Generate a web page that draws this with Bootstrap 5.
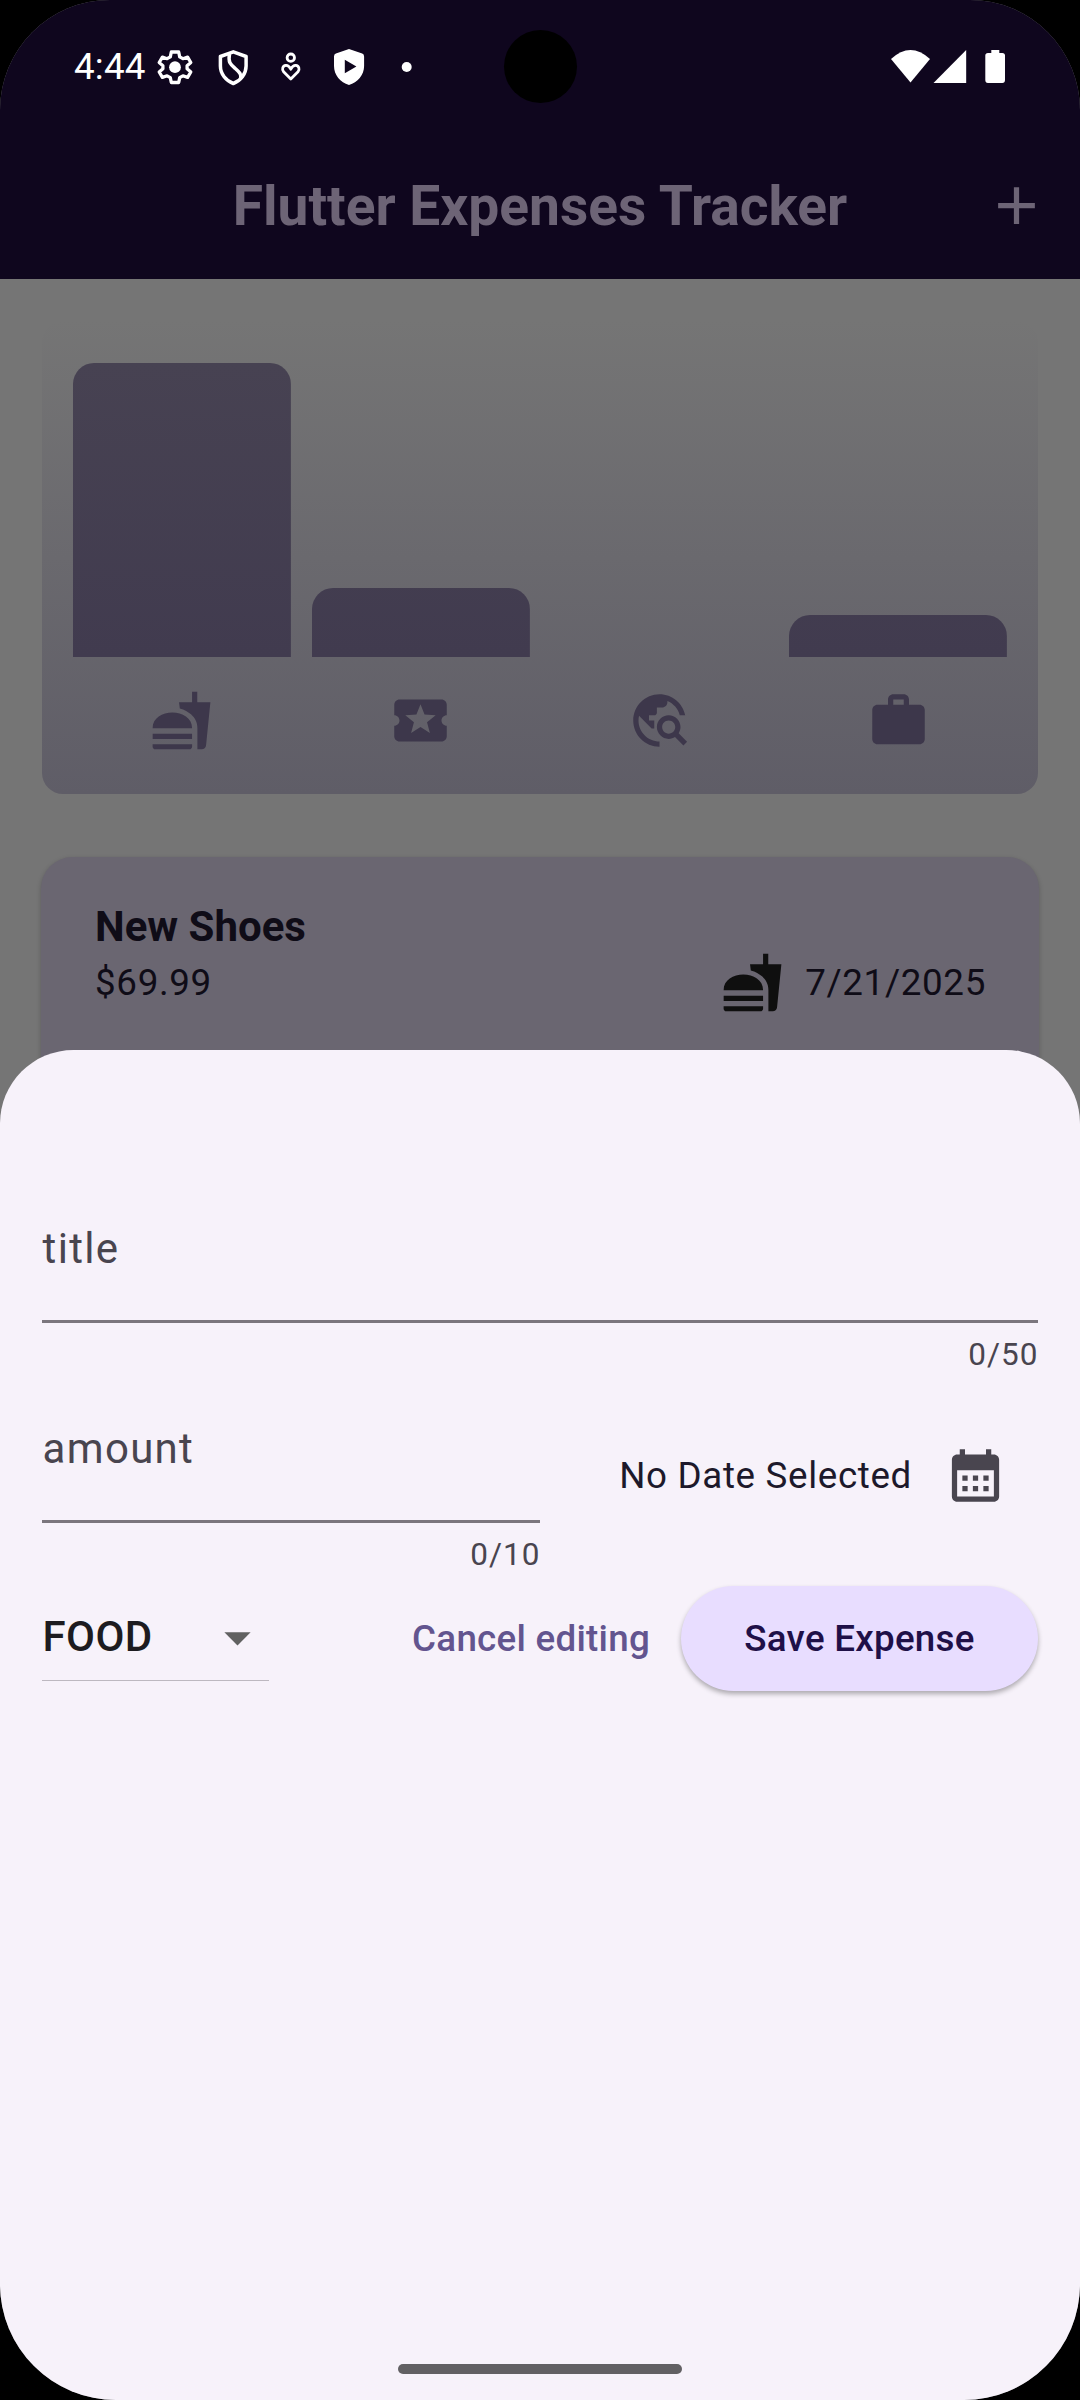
<!DOCTYPE html>
<html lang="en">
<head>
<meta charset="utf-8">
<title>Flutter Expenses Tracker</title>
<meta name="viewport" content="width=device-width, initial-scale=1">
<link href="https://cdn.jsdelivr.net/npm/bootstrap@5.3.0/dist/css/bootstrap.min.css" rel="stylesheet">
<style>
  html, body { height: 2400px; overflow: hidden; background: #000; }
  body { font-family: Roboto, sans-serif; margin: 0; }
  svg { display: block; flex: none; }
  .screen { width: 1080px; height: 2400px; background: #757575; overflow: hidden; border-radius: 110px 110px 116px 116px; }
  .top-area { background: #0f061e; height: 279px; }
  .status-row { height: 134px; padding: 0 75px 0 74px; color: #fff; }
  .clock { font-size: 36.75px; line-height: 44px; letter-spacing: .2px; width: 82px; margin-top: -1px; white-space: nowrap; }
  .camera { left: 503.5px; top: 29.5px; width: 73px; height: 73px; background: #000; }
  .title-row { height: 145px; }
  .app-title { font-size: 55.125px; font-weight: 700; line-height: 74px; margin-top: -2px; color: #6d6476; }
  .add-btn { right: 32px; top: 40px; color: #6d6476; }
  .chart-box { margin: 42px 42px 0; height: 472.5px; padding: 42px 20.5px; border-radius: 21px;
    background: linear-gradient(to top, #5f5d67, #757575); }
  .bars { height: 294px; }
  .bar-col { padding: 0 10.5px; }
  .bar { border-radius: 21px 21px 0 0; background: linear-gradient(to top, #413b4f, #474252) bottom / 100% 294px; }
  .bar-icons { margin-top: 31.5px; color: #3d374b; }
  .expense { margin: 63px 41px 0; height: 240px; padding: 42px 53px 0 54px; border-radius: 31.5px; background: #6a6671; color: #0f0c17; box-shadow: 0 2px 5px rgba(0,0,0,.22); border: 0; }
  .expense-name { font-size: 42px; font-weight: 700; line-height: 56px; margin-bottom: -4px; }
  .expense .txt-md { padding-top: 2px; }
  .food-icon { color: #0f0f0f; margin-right: 21px; }
  .txt-md { font-size: 36.75px; line-height: 52px; letter-spacing: .66px; white-space: nowrap; }
  .sheet { left: 0; top: 1050px; width: 1080px; height: 1350px; background: #f7f2fa; border-radius: 73.5px 73.5px 0 0; padding: 126px 42px 0; }
  .fld { height: 147px; border-bottom: 3px solid #7b767d; color: #49454f; font-size: 42px; letter-spacing: 1.31px; line-height: 60px; padding: 43px 0 0 .6px; }
  .counter { font-size: 31.5px; letter-spacing: 1.05px; line-height: 42px; color: #49454f; text-align: right; margin: 11px -.6px -1px 0; }
  .second-row { margin-top: 1px; }
  .date-txt { color: #1d192b; }
  .date-icon { margin: 0 31.5px; color: #49454f; }
  .actions { height: 105px; margin-top: 11px; }
  .dd { width: 227px; border-bottom: 1px solid #bdb8c0; height: 86px; margin-top: -1px; font-size: 42px; font-weight: 500; letter-spacing: .39px; color: #1d1b20; }
  .dd span { margin: 0 0 3px .6px; }
  .btn-txt { font-size: 36.75px; font-weight: 500; letter-spacing: .26px; line-height: 52px; white-space: nowrap; }
  .cancel-btn { color: #63558f; padding: 0; margin-right: 31px; border: 0; }
  .save-btn { width: 357px; height: 105px; padding: 0; border: 0; color: #1f1048; background: #e8ddff; box-shadow: 0 3px 5px rgba(0,0,0,.3); }
  .home-pill { left: 398px; top: 2364px; width: 284px; height: 10px; border-radius: 5px; background: #626063; }
</style>
<script src="https://cdn.jsdelivr.net/npm/bootstrap@5.3.0/dist/js/bootstrap.bundle.min.js"></script>
</head>
<body>
<svg width="0" height="0" class="position-absolute">
  <symbol id="fastfood" viewBox="0 0 24 24"><path fill="currentColor" d="M18.06 22.99h1.66c.84 0 1.53-.64 1.63-1.46L23 5.05h-5V1h-1.97v4.05h-4.97l.3 2.34c1.71.47 3.31 1.32 4.27 2.26 1.44 1.42 2.43 2.89 2.43 5.29v8.05zM1 21.99V21h15.03v.99c0 .55-.45 1-1.01 1H2.01c-.56 0-1.01-.45-1.01-1zm15.03-7c0-8-15.03-8-15.03 0h15.03zM1.02 17h15v2h-15z"/></symbol>
</svg>
<div class="screen position-relative">
  <header class="top-area">
    <div class="status-row d-flex align-items-center position-relative">
      <div class="clock">4:44</div>
      <!-- notification icons: settings, security shield, wellbeing, play protect, overflow dot -->
      <svg width="264" height="40" viewBox="156 47 264 40">
        <g fill="none" stroke="#fff" stroke-linejoin="round">
          <path stroke-width="3.300" d="M171.300 52h7.400l1 4.800 3.200 1.900 4.700-1.600 3.200 5.400-3.700 3.200v3.100l3.700 3.200-3.200 5.400-4.700-1.600-3.200 1.900-1 4.800h-7.400l-1-4.800-3.200-1.900-4.700 1.600-3.200-5.400 3.700-3.200v-3.100l-3.700-3.200 3.200-5.400 4.700 1.600 3.200-1.900z"/>
          <path stroke-width="3.500" d="M233.300 51.800l12.800 4.700v9.500c0 8-5.500 14.700-12.800 17.500-7.300-2.800-12.900-9.500-12.900-17.500v-9.500z"/>
          <path stroke-width="3.500" d="M229.500 54c-1.500 8.500 1 10.500 5.500 14.300 4 3.500 7 6 5.500 10"/>
          <circle stroke-width="2.800" cx="290.800" cy="57.700" r="3.700"/>
          <path stroke-width="2.800" d="M290.800 79l-7.200-7.200c-2-2.300-1-6 2.200-6.400 2.400-.2 3.800 1.400 5 3.800 1.200-2.400 2.600-4 5-3.800 3.200.4 4.200 4.100 2.200 6.400z"/>
        </g>
        <circle cx="175" cy="67.200" r="5.900" fill="#fff"/>
        <path fill="#fff" fill-rule="evenodd" d="M349 49l13.200 4.600q1.900.7 1.900 2.800V66c0 9-6.500 16.500-15.100 19-8.600-2.500-15-10-15-19v-9.600q0-2.100 1.900-2.800zM344.800 59.800v13.400l11.600-6.700z"/>
        <circle cx="406.700" cy="67" r="5" fill="#fff"/>
      </svg>
      <svg class="ms-auto" width="114" height="36" viewBox="0 0 114 36"><g fill="#fff"><path d="M0 10Q19.500-8 39 10L19.500 33.500z"/><path d="M75.200 1v33H42.500z"/><path d="M100.300 1h8v3h3q2.700 0 2.700 2.500V31q0 3-2.700 3H97q-2.700 0-2.700-3V6.500Q94.300 4 97 4h3.300z"/></g></svg>
      <div class="camera position-absolute rounded-circle"></div>
    </div>
    <div class="title-row d-flex align-items-center justify-content-center position-relative">
      <div class="app-title">Flutter Expenses Tracker</div>
      <svg class="add-btn position-absolute" width="63" height="63" viewBox="0 0 24 24"><path fill="currentColor" d="M19 13h-6v6h-2v-6H5v-2h6V5h2v6h6z"/></svg>
    </div>
  </header>
  <main>
    <section class="chart-box">
      <div class="bars row g-0 align-items-end">
        <div class="col bar-col"><div class="bar" style="height:294px"></div></div>
        <div class="col bar-col"><div class="bar" style="height:69px"></div></div>
        <div class="col bar-col"></div>
        <div class="col bar-col"><div class="bar" style="height:42px"></div></div>
      </div>
      <div class="bar-icons row g-0">
        <div class="col d-flex justify-content-center"><svg width="63" height="63"><use href="#fastfood"/></svg></div>
        <div class="col d-flex justify-content-center"><svg width="63" height="63" viewBox="0 0 24 24"><path fill="currentColor" d="M20 12c0-1.100.9-2 2-2V6c0-1.100-.9-2-2-2H4c-1.100 0-1.990.9-1.990 2v4c1.100 0 1.990.9 1.990 2s-.89 2-2 2v4c0 1.100.9 2 2 2h16c1.100 0 2-.9 2-2v-4c-1.100 0-2-.9-2-2zm-4.420 4.800L12 14.500l-3.580 2.300 1.080-4.120-3.290-2.690 4.240-.25L12 5.800l1.540 3.950 4.240.25-3.290 2.690 1.090 4.110z"/></svg></div>
        <div class="col d-flex justify-content-center"><svg width="63" height="63" viewBox="0 0 24 24"><path fill="currentColor" d="M19.300 16.900c.4-.7.7-1.500.7-2.400 0-2.500-2-4.500-4.500-4.500S11 12 11 14.500s2 4.500 4.500 4.500c.9 0 1.700-.3 2.400-.7l3.200 3.200 1.400-1.400-3.200-3.200zm-3.800.1c-1.400 0-2.500-1.100-2.500-2.500s1.100-2.500 2.500-2.500 2.500 1.100 2.500 2.500-1.100 2.500-2.500 2.500zM12 20v2C6.480 22 2 17.520 2 12S6.480 2 12 2c4.840 0 8.870 3.440 9.800 8h-2.070c-.64-2.460-2.400-4.470-4.730-5.410V5c0 1.100-.9 2-2 2h-2v2c0 .55-.45 1-1 1H8v2h2v3H9l-4.790-4.790C4.080 10.790 4 11.380 4 12c0 4.410 3.590 8 8 8z"/></svg></div>
        <div class="col d-flex justify-content-center"><svg width="63" height="63" viewBox="0 0 24 24"><path fill="currentColor" fill-rule="evenodd" d="M20 6h-4V4c0-1.110-.89-2-2-2h-4c-1.110 0-2 .89-2 2v2H4c-1.110 0-1.990.89-1.990 2L2 19c0 1.110.89 2 2 2h16c1.110 0 2-.89 2-2V8c0-1.110-.89-2-2-2zm-6 0h-4V4h4v2z"/></svg></div>
      </div>
    </section>
    <article class="card expense">
      <div class="expense-name">New Shoes</div>
      <div class="d-flex align-items-center justify-content-between">
        <div class="txt-md">$69.99</div>
        <div class="d-flex align-items-center">
          <svg class="food-icon" width="63" height="63"><use href="#fastfood"/></svg>
          <div class="txt-md">7/21/2025</div>
        </div>
      </div>
    </article>
  </main>

  <section class="sheet position-absolute">
    <div class="fld">title</div>
    <div class="counter">0/50</div>
    <div class="second-row d-flex">
      <div class="w-50">
        <div class="fld">amount</div>
        <div class="counter">0/10</div>
      </div>
      <div class="w-50 d-flex align-items-center justify-content-end">
        <div class="txt-md date-txt">No Date Selected</div>
        <svg class="date-icon" width="63" height="63" viewBox="0 0 24 24"><path fill="currentColor" fill-rule="evenodd" d="M19 4h-1V2h-2v2H8V2H6v2H5c-1.110 0-1.990.9-1.990 2L3 20c0 1.100.89 2 2 2h14c1.100 0 2-.9 2-2V6c0-1.100-.9-2-2-2zm0 16H5V10h14v10zM9 14H7v-2h2v2zm4 0h-2v-2h2v2zm4 0h-2v-2h2v2zm-8 4H7v-2h2v2zm4 0h-2v-2h2v2zm4 0h-2v-2h2v2z"/></svg>
      </div>
    </div>
    <div class="actions d-flex align-items-center">
      <div class="dd d-flex align-items-center justify-content-between">
        <span>FOOD</span>
        <svg width="63" height="63" viewBox="0 0 24 24"><path fill="#616161" d="M7 10l5 5 5-5z"/></svg>
      </div>
      <button class="btn btn-txt cancel-btn ms-auto">Cancel editing</button>
      <button class="btn btn-txt save-btn rounded-pill">Save Expense</button>
    </div>
  </section>
  <div class="home-pill position-absolute"></div>
</div>
</body>
</html>
